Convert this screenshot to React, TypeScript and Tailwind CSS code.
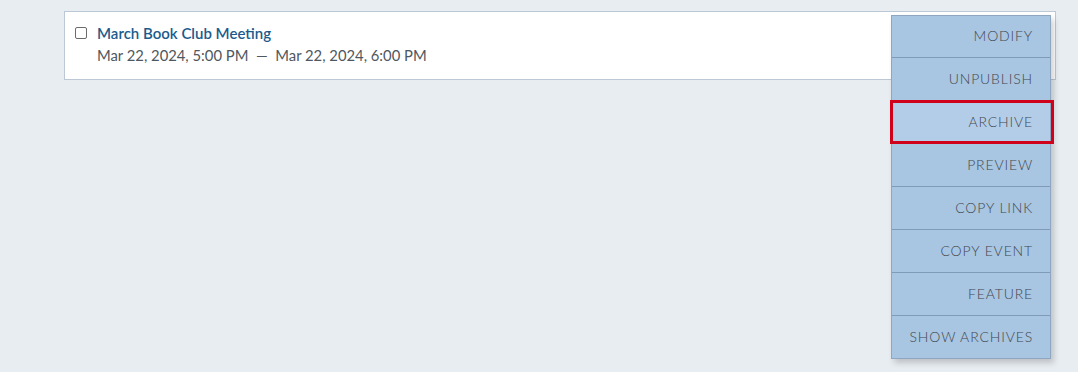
const menuItems = [
    'MODIFY',
    'UNPUBLISH',
    'ARCHIVE',
    'PREVIEW',
    'COPY LINK',
    'COPY EVENT',
    'FEATURE',
    'SHOW ARCHIVES',
];

const App = () => {
    return (
        <div className="min-h-screen w-full bg-[#e8edf1] pt-[11px] pl-[64px] pr-[22px] font-['Lato',sans-serif]">
            {/* Event row */}
            <div className="relative w-[992px] h-[69px] bg-white border border-[#bcc8d6]">
                <div className="flex items-start gap-[10px] pl-[10px] pt-[11px]">
                    <input
                        type="checkbox"
                        className="mt-[4px] w-[12px] h-[12px] appearance-none rounded-[2px] border border-[#6b6b6b] bg-white"
                    />
                    <div className="flex flex-col">
                        <a className="text-[15px] leading-[21px] font-semibold text-[#1b5b8c]">March Book Club Meeting</a>
                        <span className="mt-[1px] text-[14.8px] leading-[21px] text-[#4f5760]">
                            Mar 22, 2024, 5:00 PM &nbsp;—&nbsp; Mar 22, 2024, 6:00 PM
                        </span>
                    </div>
                </div>

                {/* Actions menu */}
                <ul className="absolute top-[3px] right-[4px] z-10 w-[160px] bg-[#a8c5e2] border border-[#8ea6bf] shadow-[3px_4px_6px_rgba(0,0,0,0.18)]">
                    {menuItems.map((item, i) => (
                        <li
                            key={item}
                            className={
                                i === 0
                                    ? 'h-[41px] flex items-center justify-end pr-[17px] pb-[2px] text-[14px] font-light tracking-[0.85px] text-[#43484e]'
                                    : item === 'ARCHIVE'
                                      ? 'relative h-[43px] flex items-center justify-end pr-[17px] pb-[2px] text-[14px] font-light tracking-[0.85px] text-[#43484e] bg-[#b3cde8] border-t border-[#7f9bb8]'
                                      : 'h-[43px] flex items-center justify-end pr-[17px] pb-[2px] text-[14px] font-light tracking-[0.85px] text-[#43484e] border-t border-[#7f9bb8]'
                            }
                        >
                            {item}
                            {item === 'ARCHIVE' && (
                                <span className="absolute -left-[2px] -right-[4px] -top-[1px] -bottom-[1px] border-[3px] border-[#d0021b]" />
                            )}
                        </li>
                    ))}
                </ul>
            </div>
        </div>
    );
};

export default App;
